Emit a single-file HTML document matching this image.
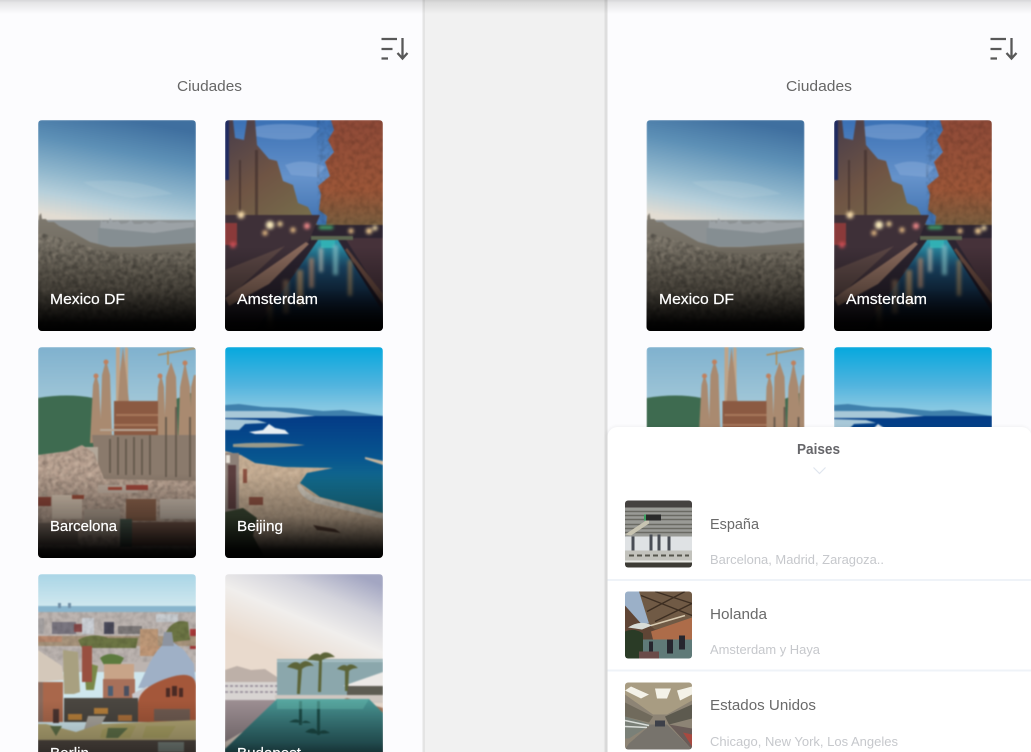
<!DOCTYPE html>
<html lang="es"><head><meta charset="utf-8"><title>Ciudades</title>
<style>html,body{margin:0;padding:0;background:#f2f2f2;overflow:hidden}svg{display:block}text{font-family:"Liberation Sans",sans-serif}</style></head>
<body>
<svg xmlns="http://www.w3.org/2000/svg" width="1031" height="752" viewBox="0 0 1031 752">
<defs>
<clipPath id="c"><rect width="158" height="211" rx="4"/></clipPath>
<clipPath id="t"><rect width="67" height="67" rx="3"/></clipPath>
<filter id="b" x="-5%" y="-5%" width="110%" height="110%" color-interpolation-filters="sRGB"><feGaussianBlur stdDeviation=".85"/></filter>
<filter id="b2" x="-100%" y="-100%" width="300%" height="300%" color-interpolation-filters="sRGB"><feGaussianBlur stdDeviation="1.6"/></filter>
<filter id="tb" x="-5%" y="-20%" width="110%" height="140%"><feGaussianBlur stdDeviation=".3"/></filter>
<filter id="ss" x="-5%" y="-5%" width="110%" height="110%"><feGaussianBlur stdDeviation="2"/></filter>
<filter id="n" x="0" y="0" width="100%" height="100%" color-interpolation-filters="sRGB"><feTurbulence type="fractalNoise" baseFrequency=".2" numOctaves="2" seed="4"/><feColorMatrix values="0 0 0 0 0 0 0 0 0 0 0 0 0 0 0 1.6 0 0 0 -.6"/><feComposite in2="SourceAlpha" operator="in"/></filter>
<filter id="nl" x="0" y="0" width="100%" height="100%" color-interpolation-filters="sRGB"><feTurbulence type="fractalNoise" baseFrequency=".22" numOctaves="2" seed="9"/><feColorMatrix values="0 0 0 0 1 0 0 0 0 .93 0 0 0 0 .84 1.6 0 0 0 -.62"/><feComposite in2="SourceAlpha" operator="in"/></filter>
<linearGradient id="shade" x1="0" y1="0" x2="0" y2="1"><stop offset=".6" stop-color="#000" stop-opacity="0"/><stop offset=".8" stop-color="#000" stop-opacity=".35"/><stop offset=".96" stop-color="#000" stop-opacity=".95"/><stop offset="1" stop-color="#000"/></linearGradient>
<linearGradient id="mexs" gradientUnits="userSpaceOnUse" x1="90" y1="0" x2="70" y2="106"><stop offset="0" stop-color="#3f6f9f"/><stop offset=".3" stop-color="#5d90b6"/><stop offset=".6" stop-color="#8fb6cc"/><stop offset=".8" stop-color="#b6cfda"/><stop offset="1" stop-color="#e2dcd2"/></linearGradient>
<linearGradient id="mexc" x1="0" y1="0" x2="0" y2="1"><stop offset="0" stop-color="#7f7a70"/><stop offset=".5" stop-color="#6a6458"/><stop offset="1" stop-color="#554e42"/></linearGradient>
<linearGradient id="amss" gradientUnits="userSpaceOnUse" x1="0" y1="0" x2="0" y2="105"><stop offset="0" stop-color="#3a70b4"/><stop offset=".55" stop-color="#6592ca"/><stop offset="1" stop-color="#3d6fae"/></linearGradient>
<linearGradient id="amsw" gradientUnits="userSpaceOnUse" x1="0" y1="120" x2="0" y2="211"><stop offset="0" stop-color="#2c9cb0"/><stop offset=".3" stop-color="#1c4a6c"/><stop offset=".7" stop-color="#10253f"/><stop offset="1" stop-color="#0a0e1c"/></linearGradient>
<linearGradient id="amsr" gradientUnits="userSpaceOnUse" x1="0" y1="0" x2="0" y2="115"><stop offset="0" stop-color="#8f4a38"/><stop offset=".6" stop-color="#9c5638"/><stop offset="1" stop-color="#6f5f40"/></linearGradient>
<linearGradient id="amsl" gradientUnits="userSpaceOnUse" x1="0" y1="0" x2="80" y2="110"><stop offset="0" stop-color="#463c4a"/><stop offset=".5" stop-color="#6f5444"/><stop offset="1" stop-color="#77704c"/></linearGradient>
<linearGradient id="bars" gradientUnits="userSpaceOnUse" x1="0" y1="0" x2="0" y2="60"><stop offset="0" stop-color="#7fb1ce"/><stop offset="1" stop-color="#a3c8d8"/></linearGradient>
<linearGradient id="beis" gradientUnits="userSpaceOnUse" x1="0" y1="0" x2="0" y2="62"><stop offset="0" stop-color="#05a8de"/><stop offset=".6" stop-color="#4fb3de"/><stop offset="1" stop-color="#88c8e2"/></linearGradient>
<linearGradient id="beiw" gradientUnits="userSpaceOnUse" x1="0" y1="70" x2="0" y2="170"><stop offset="0" stop-color="#033b86"/><stop offset=".4" stop-color="#07558f"/><stop offset=".65" stop-color="#126a8c"/><stop offset="1" stop-color="#1a7890"/></linearGradient>
<linearGradient id="bers" gradientUnits="userSpaceOnUse" x1="0" y1="0" x2="0" y2="32"><stop offset="0" stop-color="#a9d5e6"/><stop offset="1" stop-color="#cfe7ee"/></linearGradient>
<linearGradient id="buds" gradientUnits="userSpaceOnUse" x1="130" y1="0" x2="90" y2="95"><stop offset="0" stop-color="#a3a6c2"/><stop offset=".3" stop-color="#d4d4dc"/><stop offset=".6" stop-color="#f0eeec"/><stop offset="1" stop-color="#e9dacd"/></linearGradient>
<linearGradient id="budw" gradientUnits="userSpaceOnUse" x1="0" y1="125" x2="0" y2="211"><stop offset="0" stop-color="#4a9694"/><stop offset=".5" stop-color="#2f6a6e"/><stop offset="1" stop-color="#163238"/></linearGradient>
<clipPath id="mexclip"><path d="M0 112l30 8 30 10 40 5 58-5v81H0z"/></clipPath>
<clipPath id="beic"><path d="M0 104l16 4 14 8 30 4 48 1-26 5-7 10 20 14 63 16v45H0z"/></clipPath>
<clipPath id="barclip2"><path d="M0 108l30-4 14-6 12 8 10 26 92 2v77H0z"/></clipPath>

<g id="mex"><g filter="url(#b)">
<rect width="158" height="211" fill="url(#mexs)"/>
<path d="M45 62q50-6 90 12l-40 4q-30-4-50-16z" fill="#cfe0e6" opacity=".18"/>
<rect y="100" width="158" height="111" fill="#8d9294"/>
<path d="M60 108h98v18H60z" fill="#858e92"/>
<path d="M62 108l1-8 2 2 3-1 2 3 2-6 3 4 5-1 3 3 6-1 4-3 3 4 7 0 4-2 6 2 8-3 10 2 25-1v5l-40 6z" fill="#9ca2a6"/>
<path d="M0 108l1-12 2-3 1 6 4 0 2 3 6 0 5 4 13 6 18 10 20 5 24 0 30-2 32-2v89H0z" fill="url(#mexc)"/>
<rect y="100" width="158" height="111" fill="#000" filter="url(#n)" opacity=".42" clip-path="url(#mexclip)"/>
<rect y="100" width="158" height="111" fill="#000" filter="url(#nl)" opacity=".22" clip-path="url(#mexclip)"/>
</g><rect width="158" height="211" fill="url(#shade)"/></g>

<g id="ams"><g filter="url(#b)">
<rect width="158" height="211" fill="url(#amss)"/>
<path d="M25 8q30-8 70 0l-10 10q-30 4-55-2zM60 45q20-8 40 2l-8 10-26-2z" fill="#8fb0dc" opacity=".45"/>
<path d="M0 0h8l2 18 9 2 3-20 8 0 2 25 12 14 8 2 6 20 10 4 5 18 10 4 8 16 8 10H0z" fill="url(#amsl)"/>
<path d="M0 0h4v60H0z" fill="#1f2a60"/>
<path d="M30 30h3v130h-3zM14 40h2v70h-2z" fill="#3c2c2a" opacity=".6"/>
<path d="M106 0h52v118H100l2-22-8-6 2-16-3-8 12-10-5-14 9-10-6-12 6-10z" fill="url(#amsr)"/>
<rect x="92" width="66" height="118" fill="#000" filter="url(#n)" opacity=".22"/>
<rect x="0" y="105" width="158" height="106" fill="#2c2430"/>
<path d="M0 95h95l-12 28L0 176z" fill="#3e3038"/>
<path d="M0 103h12v22H0z" fill="#8a3a3a"/>
<path d="M0 150l60-24-50 46L0 176z" fill="#5a4644"/>
<path d="M120 118h38v60z" fill="#46323a"/>
<path d="M120 130l38 46v35h-30z" fill="#1c1622"/>
<path d="M0 178l81-56 3 2-40 40-40 22z" fill="#8a6a5c"/>
<path d="M122 128l36 46v10l-38-54z" fill="#67493f"/>
<path d="M93 120h20l45 72v19H30z" fill="url(#amsw)"/>
<path d="M86 116h42v4H86z" fill="#5d6650"/>
<path d="M96 120h14v8H96z" fill="#31b0b4"/>
<g filter="url(#b2)"><rect x="84" y="138" width="5" height="30" fill="#b08a72" opacity=".85"/><rect x="72" y="150" width="6" height="36" fill="#b89468" opacity=".8"/><rect x="58" y="160" width="6" height="34" fill="#a08060" opacity=".6"/><rect x="94" y="128" width="4" height="24" fill="#9cb0b0"/><rect x="108" y="125" width="5" height="30" fill="#6fb0bc"/><rect x="123" y="140" width="4" height="36" fill="#8c7c60"/><rect x="42" y="185" width="6" height="24" fill="#8a7050" opacity=".6"/></g>
<g filter="url(#b2)"><circle cx="45" cy="105" r="4" fill="#fff0c0"/><circle cx="16" cy="95" r="3.500" fill="#ffe4b0"/><circle cx="55" cy="104" r="2.500" fill="#ffe0a0"/><circle cx="40" cy="113" r="2.500" fill="#ffd090"/><circle cx="68" cy="110" r="2.500" fill="#ffd090"/><circle cx="82" cy="106" r="3" fill="#ff9090"/><circle cx="126" cy="111" r="2.500" fill="#ffd090"/><circle cx="144" cy="111" r="3" fill="#ffd898"/><circle cx="150" cy="108" r="2.500" fill="#ffe8b0"/><rect x="94" y="106" width="14" height="3" fill="#4ac078"/><circle cx="8" cy="125" r="3" fill="#d05058"/></g>
</g><rect width="158" height="211" fill="url(#shade)"/></g>

<g id="bar"><g filter="url(#b)">
<rect width="158" height="211" fill="url(#bars)"/>
<path d="M0 51q30-5 55 0l22 60-77 0z" fill="#3e6b50"/>
<path d="M138 52l20-8v70h-24z" fill="#3e6b50"/>
<path d="M78 0h4v56h-4zM87 0l3 1v50h-3z" fill="#bfa488"/>
<path d="M120 8l38-7M130 4v14" stroke="#b58a50" stroke-width="1.500" fill="none"/>
<g fill="#a98a70"><path d="M52 96l3-58 3-11 3 11 3 58z"/><path d="M62 90l2-62 4-15 4 15 2 62z"/><path d="M80 55l2-30 3-25 3 25 3 30z"/><path d="M117 130l3-90 3-13 3 13 3 90z"/><path d="M125 130l3-100 5-15 5 15 3 100z"/><path d="M139 130l3-90 5-25 5 25 3 90z"/><path d="M151 130l2-90 3-12 2 0v102z"/></g>
<g fill="#c0805e"><circle cx="58" cy="29" r="2.500"/><circle cx="68" cy="15" r="2.500"/><circle cx="122" cy="29" r="2.500"/><circle cx="147" cy="16" r="2.500"/></g>
<rect x="76" y="54" width="44" height="34" fill="#8b5a42"/>
<path d="M78 68h42M76 78h44" stroke="#a8785c" stroke-width="2"/>
<path d="M54 88h104v50H60z" fill="#8a7a6c"/>
<path d="M72 92v34M80 90v38M88 92v36M96 90v38M104 92v36M112 88v40M128 70v60M138 60v70M152 70v60" stroke="#5f5448" stroke-width="1.600"/>
<path d="M62 83h56" stroke="#b8a898" stroke-width="2"/>
<rect x="42" y="100" width="18" height="28" fill="#b3a89a"/>
<path d="M0 108l30-4 14-6 12 8 10 26 92 2v77H0z" fill="#b59e8e"/>
<rect y="98" width="158" height="113" fill="#000" filter="url(#n)" opacity=".3" clip-path="url(#barclip2)"/>
<rect y="98" width="158" height="113" fill="#000" filter="url(#nl)" opacity=".35" clip-path="url(#barclip2)"/>
<rect x="0" y="150" width="13" height="9" fill="#8a4538"/><rect x="14" y="148" width="30" height="24" fill="#cdbcaa"/><rect x="34" y="148" width="12" height="4" fill="#954a38"/><rect x="60" y="138" width="40" height="8" fill="#b8a89a"/><rect x="70" y="140" width="14" height="3" fill="#a04838"/><rect x="88" y="138" width="22" height="5" fill="#9a4438"/><rect x="88" y="152" width="30" height="22" fill="#88604a"/><rect x="122" y="152" width="36" height="20" fill="#c4b6a8"/><rect x="94" y="175" width="64" height="24" fill="#7a5a4c"/><rect x="82" y="172" width="12" height="28" fill="#4a5a4e"/><rect x="46" y="162" width="36" height="26" fill="#b0a090"/><rect x="0" y="176" width="40" height="22" fill="#85756a"/>
</g><rect width="158" height="211" fill="url(#shade)"/></g>

<g id="bei"><g filter="url(#b)">
<rect width="158" height="211" fill="url(#beis)"/>
<path d="M0 58l14-1 24 3 30 1 30 3 20-1 40 6v4H0z" fill="#3f80ac"/>
<rect y="69" width="158" height="142" fill="url(#beiw)"/>
<path d="M0 64h50l40 5-30 2H0zM0 72l32 1 10 3-22 1-6 6H0z" fill="#a8c8d8"/>
<path d="M24 85l14-2 6-6 6 4 10 2 4 4H30z" fill="#e8eef2"/>
<path d="M8 97q40-3 72 1q-30 4-72 2z" fill="#9a9a8a"/>
<path d="M140 110l18 4v4l-18-6z" fill="#c6b49c"/>
<path d="M0 104l16 4 14 8 30 4 48 1-26 5-7 10 20 14 63 16v45H0z" fill="#c4ac92"/>
<path d="M75 137q6 10 20 14l63 16v5l-68-16q-16-6-18-18z" fill="#d8e0dc" opacity=".55"/>
<rect y="104" width="158" height="107" fill="#000" filter="url(#n)" opacity=".14" clip-path="url(#beic)"/>
<rect y="104" width="158" height="107" fill="#000" filter="url(#nl)" opacity=".2" clip-path="url(#beic)"/>
<rect x="0" y="106" width="14" height="60" fill="#8d8078"/>
<rect x="1" y="108" width="4" height="8" fill="#e4dfd6"/>
<rect x="3" y="118" width="8" height="44" fill="#5b3e3e"/>
<path d="M18 122h4v14h-4zM24 150h14v8H24z" fill="#8a5040"/>
<path d="M0 165l18-4 14 10-4 18 12 22H0z" fill="#3a4632"/>
<path d="M88 178l22 4 6 4-24-3z" fill="#5a4034"/>
</g><rect width="158" height="211" fill="url(#shade)"/></g>

<g id="ber"><g filter="url(#b)">
<rect width="158" height="211" fill="url(#bers)"/>
<rect y="32" width="158" height="8" fill="#88b4cc"/>
<path d="M20 34v-5h3v5zM30 34v-5h3v5z" fill="#6f8ea6"/>
<rect y="38" width="158" height="60" fill="#bcb4b0"/>
<rect x="14" y="48" width="24" height="12" fill="#7a7680"/><rect x="44" y="44" width="12" height="16" fill="#ccd0d6"/><rect x="36" y="50" width="8" height="8" fill="#8a4a4a"/><rect x="66" y="48" width="10" height="12" fill="#4a4a5a"/><rect x="80" y="52" width="24" height="8" fill="#7c7878"/><rect x="118" y="40" width="22" height="8" fill="#c8ccd0"/><rect x="0" y="44" width="6" height="16" fill="#a8a4a4"/><rect x="152" y="55" width="6" height="20" fill="#a83838"/>
<rect y="62" width="158" height="10" fill="#a8947c"/>
<path d="M40 66q14-8 30-2l30 0-2 10H44zM128 58q8-14 22-10l2 18-18 2z" fill="#6c7544"/>
<rect x="102" y="55" width="18" height="18" fill="#bd9878"/>
<rect x="0" y="62" width="24" height="6" fill="#b88a70"/>
<rect x="102" y="72" width="24" height="10" fill="#c09878"/>
<rect y="38" width="158" height="50" fill="#000" filter="url(#n)" opacity=".18"/>
<path d="M62 84q10-8 24 0l-4 7H66z" fill="#5c7a3e"/>
<path d="M46 88l14 4-4 24H48z" fill="#7a8848"/>
<path d="M25 76l15 2 2 40-6 2H26z" fill="#a8a080"/>
<rect x="66" y="90" width="30" height="16" fill="#c8a488"/>
<path d="M0 76l24 16 2 14L0 108z" fill="#d4c8ba"/>
<path d="M5 108h20v40H5z" fill="#a9674b"/><rect x="0" y="108" width="5" height="40" fill="#8a6a5c"/>
<rect x="15" y="135" width="6" height="14" fill="#4a3430"/>
<path d="M44 72h10v36H44z" fill="#984f40"/>
<rect x="65" y="105" width="32" height="26" fill="#a8705a"/>
<rect x="70" y="112" width="5" height="10" fill="#4a5e74"/><rect x="86" y="112" width="5" height="10" fill="#4a5060"/>
<path d="M112 88q10-18 20-22l14 10 10 14 2 24H100z" fill="#9fb0c6"/>
<path d="M126 58h8l2 14h-12z" fill="#8d94a0"/>
<path d="M94 120l16-8v20l-14 4z" fill="#c8c8cc"/>
<path d="M100 148v-18q0-16 30-26t28 12v32z" fill="#a4573a"/>
<rect x="128" y="114" width="4" height="9" fill="#4a2a24"/><rect x="134" y="112" width="5" height="10" fill="#4a2a24"/><rect x="141" y="114" width="4" height="9" fill="#4a2a24"/>
<rect x="116" y="135" width="36" height="12" fill="#6e5a50"/>
<rect x="26" y="124" width="74" height="24" fill="#4a4640"/>
<rect x="30" y="140" width="14" height="6" fill="#b47e3a"/><rect x="56" y="134" width="14" height="6" fill="#b47e3a"/><rect x="80" y="141" width="14" height="6" fill="#a86e3a"/>
<path d="M50 142h18l-8 14H46z" fill="#a8a49c"/>
<path d="M0 150h8l30 8 24-8 96-4v20H0z" fill="#b2a674"/>
<path d="M64 156q14-8 34-4l-6 12H62zM108 152h30l-8 12h-26z" fill="#a8a060" opacity=".8"/>
<path d="M12 152h12l-6 10zM70 154h20l-10 10h-12z" fill="#5e7048"/>
<rect y="166" width="158" height="45" fill="#4e4640"/>
<rect x="120" y="168" width="26" height="10" fill="#76807a"/>
</g><rect width="158" height="211" fill="url(#shade)" opacity=".7"/></g>

<g id="bud"><g filter="url(#b)">
<rect width="158" height="211" fill="url(#buds)"/>
<path d="M0 96l12-4 14 4 14-1 12 8v22H0z" fill="#bdb0a8"/>
<path d="M52 85h106v40H52z" fill="#8ba7ac"/>
<path d="M52 87h106" stroke="#a8c0c4" stroke-width="2"/>
<path d="M118 112l40-14v14h-40z" fill="#ece9e6"/>
<path d="M122 112h36v14h-36z" fill="#5d5c52"/>
<g fill="#5c6438"><path d="M62 93q8-8 13-3 6-7 14 2-7-1-12 3l-2 25h-3l1-24q-6-2-11-3z"/><path d="M82 86q8-9 13-5 6-6 15 2-8 0-13 3l-1 32h-3l1-31q-6-1-12-1z"/><path d="M112 95q6-6 10-3 4-4 11 2-6 0-9 3l-1 20h-3v-20q-4-1-8-2z"/></g>
<path d="M0 108h52v18H0z" fill="#d8d4d2"/>
<path d="M0 112h52M0 118h52" stroke="#8e8492" stroke-width="1.500" stroke-dasharray="3 2"/>
<path d="M0 126h52v12L0 168z" fill="#9c8e92"/>
<path d="M50 121h108v8H50z" fill="#cfc7c0"/>
<path d="M122 124l36 10v6l-42-14z" fill="#a4785e"/>
<path d="M52 125h92l14 14v72H0v-36z" fill="url(#budw)"/>
<path d="M74 127h3v24h-3zM92 127h3v34h-3zM64 148q10-6 12 2 3-6 10-1-12 0-22-1zM80 158q10-8 13 2 4-7 12-1-14 2-25-1z" fill="#1c4c48"/>
<path d="M52 125h92l-6 10H52z" fill="#5fb0a6" opacity=".6"/>
</g><rect width="158" height="211" fill="url(#shade)" opacity=".85"/></g>

<g id="t1"><g filter="url(#tb)">
<rect width="67" height="67" fill="#9a9b96"/>
<rect width="67" height="7" fill="#44433f"/>
<path d="M0 11h67M0 15h67M0 19h67M0 24h67M0 28h67M0 32h67" stroke="#6a6a64" stroke-width="1.600"/>
<path d="M0 34l24-16v5L6 35z" fill="#c8c4b2"/>
<rect x="20" y="14" width="16" height="6" fill="#2c2c2a"/><rect x="19" y="14" width="2" height="6" fill="#3aa060"/>
<rect y="36" width="67" height="15" fill="#dfe2e4"/>
<path d="M8 36v14M26 34v16M34 34v16M44 36v14" stroke="#4a4e54" stroke-width="3"/>
<rect y="50" width="67" height="10" fill="#c2c2bc"/>
<path d="M4 55h60" stroke="#55544e" stroke-width="2" stroke-dasharray="5 3"/>
<rect y="60" width="67" height="2" fill="#e8e8e4"/>
<rect y="62" width="67" height="5" fill="#3c3a36"/>
</g></g>
<g id="t2"><g filter="url(#tb)">
<rect width="67" height="67" fill="#5e4434"/>
<path d="M12 0h55v30L30 38 20 30z" fill="#6f5a44"/>
<path d="M16 4l51 20M30 0l37 12M22 20L60 0M30 30L67 12" stroke="#3e2e22" stroke-width="1.400"/>
<path d="M0 0h14l10 32-8 0L0 14z" fill="#9bb0c8"/>
<path d="M26 40L67 26v22H28z" fill="#ad6c4a"/>
<path d="M26 34L60 24" stroke="#d8cab0" stroke-width="1.500"/>
<path d="M3 36q12-8 24-2l-10 4z" fill="#d8dcd8"/>
<path d="M0 40q10-4 18 2v25H0z" fill="#2b3a26"/>
<rect x="18" y="48" width="49" height="19" fill="#5f7a78"/>
<path d="M42 48h6v14h-6zM54 44h6v14h-6zM24 50h4v14h-4z" fill="#26282e"/>
<path d="M14 60h20v7H14z" fill="#6a4c48"/>
</g></g>
<g id="t3"><g filter="url(#tb)">
<rect width="67" height="67" fill="#8d8474"/>
<path d="M0 0h67v18L42 32H28L0 12z" fill="#a89c82"/>
<path d="M6 4l18 8-8 4L0 8zM30 6h16l-4 10H32zM52 8l15-4v8l-12 6z" fill="#f4f2e8"/>
<path d="M0 20l28 14-4 6L0 34z" fill="#6f6a5c"/>
<path d="M40 34l27-12v14L44 42z" fill="#5d5a50"/>
<path d="M0 34l26 8-22 14H0z" fill="#7a8078"/>
<path d="M0 38l24 5M0 44l22 1" stroke="#d8dcd8" stroke-width="1.500"/>
<path d="M26 42h16l25 25H0l4-6z" fill="#77736c"/>
<path d="M44 42l23 4v21z" fill="#6a5c58"/>
<path d="M58 50l9 2v12z" fill="#a84a40"/>
<path d="M30 38h10v6H30z" fill="#3e4048"/>
</g></g>
<linearGradient id="top" x1="0" y1="0" x2="0" y2="1"><stop offset="0" stop-color="#000" stop-opacity=".15"/><stop offset=".2" stop-color="#000" stop-opacity=".09"/><stop offset="1" stop-color="#000" stop-opacity="0"/></linearGradient>
</defs>

<rect width="1031" height="752" fill="#f1f1f1"/>
<rect width="422.500" height="752" fill="#fcfcfe"/>
<rect x="607.500" width="423.500" height="752" fill="#fcfcfe"/>
<rect x="422.500" width="2.500" height="752" fill="#e4e4e4"/>
<rect x="604.500" width="3" height="752" fill="#dedede"/>

<g transform="translate(38,120)"><g clip-path="url(#c)"><use href="#mex"/></g></g>
<g transform="translate(225,120)"><g clip-path="url(#c)"><use href="#ams"/></g></g>
<g transform="translate(38,347)"><g clip-path="url(#c)"><use href="#bar"/></g></g>
<g transform="translate(225,347)"><g clip-path="url(#c)"><use href="#bei"/></g></g>
<g transform="translate(38,574)"><g clip-path="url(#c)"><use href="#ber"/></g></g>
<g transform="translate(225,574)"><g clip-path="url(#c)"><use href="#bud"/></g></g>
<g transform="translate(646.500,120)"><g clip-path="url(#c)"><use href="#mex"/></g></g>
<g transform="translate(834,120)"><g clip-path="url(#c)"><use href="#ams"/></g></g>
<g transform="translate(646.500,347)"><g clip-path="url(#c)"><use href="#bar"/></g></g>
<g transform="translate(834,347)"><g clip-path="url(#c)"><use href="#bei"/></g></g>

<rect width="1031" height="14" fill="url(#top)"/>

<g filter="url(#tb)">
<text x="177" y="91" font-size="15" fill="#666" textLength="65" lengthAdjust="spacingAndGlyphs">Ciudades</text>
<text x="786" y="91" font-size="15" fill="#666" textLength="66" lengthAdjust="spacingAndGlyphs">Ciudades</text>
<g fill="#fff" stroke="#fff" stroke-width=".2" font-size="15">
<text x="50" y="304" textLength="75" lengthAdjust="spacingAndGlyphs">Mexico DF</text>
<text x="237" y="304" textLength="81" lengthAdjust="spacingAndGlyphs">Amsterdam</text>
<text x="659" y="304" textLength="75" lengthAdjust="spacingAndGlyphs">Mexico DF</text>
<text x="846" y="304" textLength="81" lengthAdjust="spacingAndGlyphs">Amsterdam</text>
<text x="50" y="531" textLength="67" lengthAdjust="spacingAndGlyphs">Barcelona</text>
<text x="237" y="531" textLength="46" lengthAdjust="spacingAndGlyphs">Beijing</text>
<text x="50" y="758" textLength="39" lengthAdjust="spacingAndGlyphs">Berlin</text>
<text x="237" y="758" textLength="64" lengthAdjust="spacingAndGlyphs">Budapest</text>
</g>
<g fill="none" stroke="#585858" stroke-width="2.300">
<path d="M381.500 39h15.500M381.500 49h11M381.500 58.500h6.500M402.500 38v20M397.500 53l5 5.500 5-5.500"/>
<path d="M990.500 39h15.500M990.500 49h11M990.500 58.500h6.500M1011.500 38v20M1006.500 53l5 5.500 5-5.500"/>
</g>
</g>

<path d="M607 760V437a10 10 0 0 1 10-10h404a10 10 0 0 1 10 10v323z" fill="#000" opacity=".07" filter="url(#ss)"/>
<path d="M607.500 752V437a10 10 0 0 1 10-10h404a10 10 0 0 1 10 10v315z" fill="#fff"/>
<rect x="607.500" y="579" width="423.500" height="2" fill="#eff3f8"/>
<rect x="607.500" y="669.500" width="423.500" height="2" fill="#eff3f8"/>
<path d="M813.500 467.500l6 6 6-6" fill="none" stroke="#dfe5ee" stroke-width="1.200"/>
<g transform="translate(625,500.500)"><g clip-path="url(#t)"><use href="#t1"/></g></g>
<g transform="translate(625,591.500)"><g clip-path="url(#t)"><use href="#t2"/></g></g>
<g transform="translate(625,682.500)"><g clip-path="url(#t)"><use href="#t3"/></g></g>
<g filter="url(#tb)">
<text x="797" y="454" font-size="14.500" font-weight="700" fill="#66666a" textLength="43" lengthAdjust="spacingAndGlyphs">Paises</text>
<g font-size="15" fill="#6a6a6a">
<text x="710" y="529" textLength="49" lengthAdjust="spacingAndGlyphs">España</text>
<text x="710" y="619" textLength="57" lengthAdjust="spacingAndGlyphs">Holanda</text>
<text x="710" y="710" textLength="106" lengthAdjust="spacingAndGlyphs">Estados Unidos</text>
</g>
<g font-size="12.500" fill="#c6c8cc">
<text x="710" y="564" textLength="174" lengthAdjust="spacingAndGlyphs">Barcelona, Madrid, Zaragoza..</text>
<text x="710" y="654" textLength="110" lengthAdjust="spacingAndGlyphs">Amsterdam y Haya</text>
<text x="710" y="746" textLength="188" lengthAdjust="spacingAndGlyphs">Chicago, New York, Los Angeles</text>
</g>
</g>
</svg>
</body></html>
